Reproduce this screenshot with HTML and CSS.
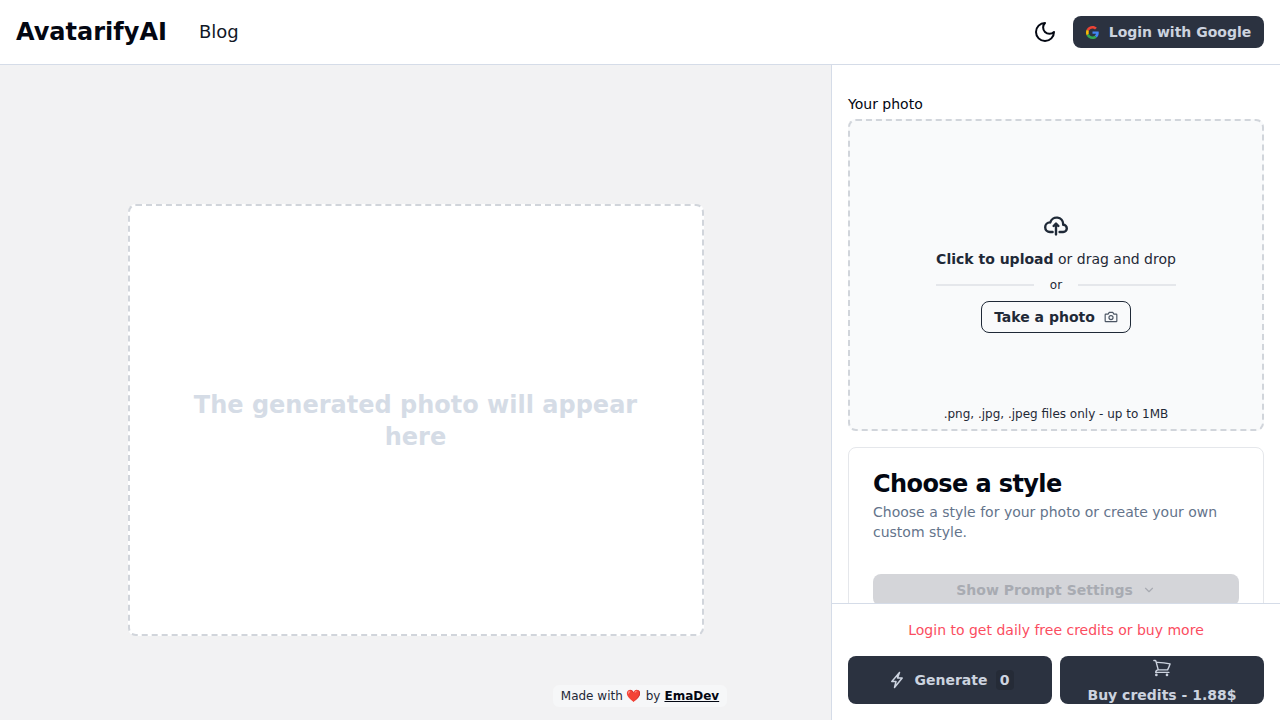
FILE: index.html
```html
<!DOCTYPE html>
<html lang="en">
<head>
  <meta charset="UTF-8">
  <meta name="viewport" content="width=device-width, initial-scale=1.0">
  <title>AvatarifyAI</title>
  <link rel="stylesheet" href="styles.css">
</head>
<body>

<header class="navbar">
  <div class="navbar-left">
    <a class="brand">AvatarifyAI</a>
    <a class="nav-link">Blog</a>
  </div>
  <div class="navbar-right">
    <button class="theme-toggle" aria-label="Toggle theme">
      <svg width="24" height="24" viewBox="0 0 24 24" fill="none" stroke="currentColor" stroke-width="2" stroke-linecap="round" stroke-linejoin="round"><path d="M12 3a6 6 0 0 0 9 9 9 9 0 1 1-9-9Z"/></svg>
    </button>
    <button class="btn btn-login">
      <svg width="13" height="13" viewBox="0 0 48 48"><path fill="#EA4335" d="M24 9.5c3.5 0 6.700 1.200 9.200 3.600l6.900-6.900C35.900 2.400 30.500 0 24 0 14.600 0 6.500 5.400 2.600 13.200l8 6.200C12.500 13.700 17.800 9.500 24 9.500z"/><path fill="#4285F4" d="M47 24.500c0-1.600-.1-3.100-.4-4.500H24v9h13c-.6 3-2.300 5.500-4.800 7.200l7.700 6C44.400 38.100 47 31.900 47 24.500z"/><path fill="#FBBC05" d="M10.600 28.600c-.5-1.400-.8-3-.8-4.600s.3-3.200.8-4.600l-8-6.200C.9 16.500 0 20.100 0 24s.9 7.500 2.600 10.800l8-6.200z"/><path fill="#34A853" d="M24 48c6.500 0 11.900-2.100 15.900-5.800l-7.700-6c-2.200 1.400-4.900 2.300-8.200 2.300-6.200 0-11.500-4.200-13.400-9.900l-8 6.200C6.500 42.600 14.600 48 24 48z"/></svg>
      Login with Google
    </button>
  </div>
</header>

<main class="layout">
  <section class="preview">
    <div class="preview-box">
      <p>The generated photo will appear here</p>
    </div>
    <div class="credit">Made with <span class="heart">❤️</span> by <a>EmaDev</a></div>
  </section>

  <aside class="sidebar">
    <div class="sidebar-scroll">
      <label class="field-label">Your photo</label>
      <div class="dropzone">
        <svg class="upload-icon" width="24" height="20" viewBox="0 0 20 16" fill="none" stroke="currentColor" stroke-width="2" stroke-linecap="round" stroke-linejoin="round"><path d="M13 13h3a3 3 0 0 0 0-6h-.025A5.56 5.56 0 0 0 16 6.500 5.500 5.500 0 0 0 5.207 5.021C5.137 5.017 5.071 5 5 5a4 4 0 0 0 0 8h2.167M10 15V6m0 0L8 8m2-2 2 2"/></svg>
        <p class="drop-text"><strong>Click to upload</strong> or drag and drop</p>
        <div class="divider"><span>or</span></div>
        <button class="btn-photo">
          Take a photo
          <svg width="14" height="14" viewBox="0 0 24 24" fill="none" stroke="#4b5563" stroke-width="2" stroke-linecap="round" stroke-linejoin="round"><path d="M3 7h4l2-3h6l2 3h4a1 1 0 0 1 1 1v11a1 1 0 0 1-1 1H3a1 1 0 0 1-1-1V8a1 1 0 0 1 1-1z"/><circle cx="12" cy="13" r="3.500"/></svg>
        </button>
        <p class="drop-hint">.png, .jpg, .jpeg files only - up to 1MB</p>
      </div>

      <div class="style-card">
        <h2>Choose a style</h2>
        <p>Choose a style for your photo or create your own custom style.</p>
        <button class="btn-prompt">
          Show Prompt Settings
          <svg width="14" height="14" viewBox="0 0 24 24" fill="none" stroke="currentColor" stroke-width="2" stroke-linecap="round" stroke-linejoin="round"><path d="m6 9 6 6 6-6"/></svg>
        </button>
      </div>
    </div>

    <div class="sidebar-footer">
      <p class="login-note">Login to get daily free credits or buy more</p>
      <div class="actions">
        <button class="btn btn-action">
          <svg width="20" height="20" viewBox="0 0 20 20" fill="none" stroke="currentColor" stroke-width="1.500" stroke-linecap="round" stroke-linejoin="round"><path d="M12.500 2.500 4.800 11.500H9L7.500 17.500 15.200 8H10.500z"/></svg>
          Generate
          <span class="count">0</span>
        </button>
        <button class="btn btn-buy">
          <svg width="20" height="20" viewBox="0 0 24 24" fill="none" stroke="currentColor" stroke-width="1.700" stroke-linecap="round" stroke-linejoin="round"><path d="M2.250 3h1.386c.51 0 .955.343 1.087.835l.383 1.437M7.500 14.250a3 3 0 0 0-3 3h15.750m-12.750-3h11.218c1.121-2.300 2.100-4.684 2.924-7.138a60.114 60.114 0 0 0-16.536-1.840M7.500 14.250 5.106 5.272M6 20.250a.75.75 0 1 1-1.500 0 .75.75 0 0 1 1.500 0zm12.750 0a.75.75 0 1 1-1.500 0 .75.75 0 0 1 1.500 0z"/></svg>
          <span>Buy credits - 1.88$</span>
        </button>
      </div>
    </div>
  </aside>
</main>

</body>
</html>
```

FILE: styles.css
```css
* {
  box-sizing: border-box;
}

html, body {
  height: 100%;
}

body {
  margin: 0;
  overflow: hidden;
  font-family: "DejaVu Sans", sans-serif;
  background-color: white;
  color: #030712;
}

p, h2 {
  margin: 0;
}

button {
  font-family: inherit;
  cursor: pointer;
}

button svg {
  flex-shrink: 0;
}

/* top bar */
.navbar {
  height: 65px;
  padding: 0 16px;
  display: flex;
  align-items: center;
  justify-content: space-between;
  border-bottom: 1px solid #d5dce8;
}

.navbar-left {
  display: flex;
  align-items: center;
  gap: 32px;
}

.brand {
  font-size: 24px;
  font-weight: 700;
  line-height: 32px;
}

.nav-link {
  font-size: 18px;
  line-height: 28px;
  color: #111827;
}

.navbar-right {
  display: flex;
  align-items: center;
  gap: 16px;
}

.theme-toggle {
  width: 24px;
  height: 24px;
  padding: 0;
  display: flex;
  border: none;
  background: none;
  color: #030712;
}

.btn {
  display: flex;
  align-items: center;
  justify-content: center;
  border: none;
  border-radius: 8px;
  background-color: #2b3240;
  color: #ccd3df;
  font-size: 14px;
  font-weight: 700;
}

.btn-login {
  width: 191px;
  height: 32px;
  gap: 10px;
}

/* page body */
.layout {
  display: flex;
  height: 655px;
}

.preview {
  position: relative;
  width: 831px;
  padding-top: 139px;
  display: flex;
  justify-content: center;
  align-items: flex-start;
  background-color: #f2f2f3;
}

.preview-box {
  width: 576px;
  height: 432px;
  padding: 2px 48px 0;
  display: flex;
  align-items: center;
  justify-content: center;
  border: 2px dashed #d1d5db;
  border-radius: 8px;
  background-color: white;
}

.preview-box p {
  text-align: center;
  font-size: 24px;
  font-weight: 700;
  line-height: 32px;
  color: #d5dce6;
}

.credit {
  position: absolute;
  left: 553px;
  top: 620px;
  width: 174px;
  height: 22px;
  display: flex;
  align-items: center;
  justify-content: center;
  gap: 4px;
  border-radius: 6px;
  background-color: #f6f7f8;
  font-size: 12px;
  color: #1f2937;
}

.credit .heart {
  font-family: "Noto Color Emoji", sans-serif;
}

.credit a {
  font-weight: 700;
  color: #030712;
  text-decoration: underline;
}

/* right column */
.sidebar {
  flex: 1;
  min-width: 0;
  display: flex;
  flex-direction: column;
  border-left: 1px solid #d5dce8;
  background-color: white;
}

.sidebar-scroll {
  flex: 1;
  min-height: 0;
  overflow: hidden;
  padding: 29px 16px 0;
}

.field-label {
  display: block;
  font-size: 14px;
  line-height: 20px;
  margin-bottom: 5px;
}

.dropzone {
  position: relative;
  height: 312px;
  padding-top: 95px;
  display: flex;
  flex-direction: column;
  align-items: center;
  border: 2px dashed #d1d5db;
  border-radius: 8px;
  background-color: #f9fafb;
  color: #1f2937;
}

.upload-icon {
  display: block;
}

.drop-text {
  margin-top: 13px;
  font-size: 14px;
  line-height: 20px;
}

.divider {
  width: 240px;
  margin-top: 8px;
  display: flex;
  align-items: center;
  gap: 16px;
  font-size: 12px;
  line-height: 16px;
}

.divider::before,
.divider::after {
  content: "";
  flex: 1;
  height: 2px;
  background-color: #e5e7eb;
}

.btn-photo {
  width: 150px;
  height: 32px;
  margin-top: 8px;
  display: flex;
  align-items: center;
  justify-content: center;
  gap: 9px;
  border: 1px solid #1f2937;
  border-radius: 8px;
  background: none;
  color: #1f2937;
  font-size: 14px;
  font-weight: 700;
}

.drop-hint {
  position: absolute;
  left: 0;
  right: 0;
  bottom: 7px;
  text-align: center;
  font-size: 12px;
  line-height: 16px;
}

.style-card {
  margin-top: 16px;
  height: 300px;
  padding: 20px 24px;
  border: 1px solid #e5e7eb;
  border-radius: 8px;
}

.style-card h2 {
  margin-bottom: 2px;
  font-size: 24px;
  font-weight: 700;
  line-height: 32px;
  letter-spacing: -0.025em;
}

.style-card p {
  font-size: 14px;
  line-height: 20px;
  color: #64748b;
}

.btn-prompt {
  width: 100%;
  height: 32px;
  margin-top: 32px;
  display: flex;
  align-items: center;
  justify-content: center;
  gap: 9px;
  border: none;
  border-radius: 8px;
  background-color: #d4d5d9;
  color: #a8abb2;
  font-size: 14px;
  font-weight: 700;
}

.sidebar-footer {
  height: 117px;
  padding: 16px 16px 0;
  border-top: 1px solid #d5dce8;
}

.login-note {
  text-align: center;
  font-size: 14px;
  line-height: 20px;
  color: #fb4d5f;
}

.actions {
  margin-top: 16px;
  display: grid;
  grid-template-columns: 1fr 1fr;
  gap: 8px;
}

.btn-action,
.btn-buy {
  height: 48px;
}

.btn-action {
  gap: 8px;
}

.count {
  width: 18px;
  height: 20px;
  display: flex;
  align-items: center;
  justify-content: center;
  border-radius: 4px;
  background-color: #252b37;
}

.btn-buy {
  flex-direction: column;
  justify-content: flex-start;
  gap: 7px;
  padding-top: 2px;
  line-height: 20px;
}
```
